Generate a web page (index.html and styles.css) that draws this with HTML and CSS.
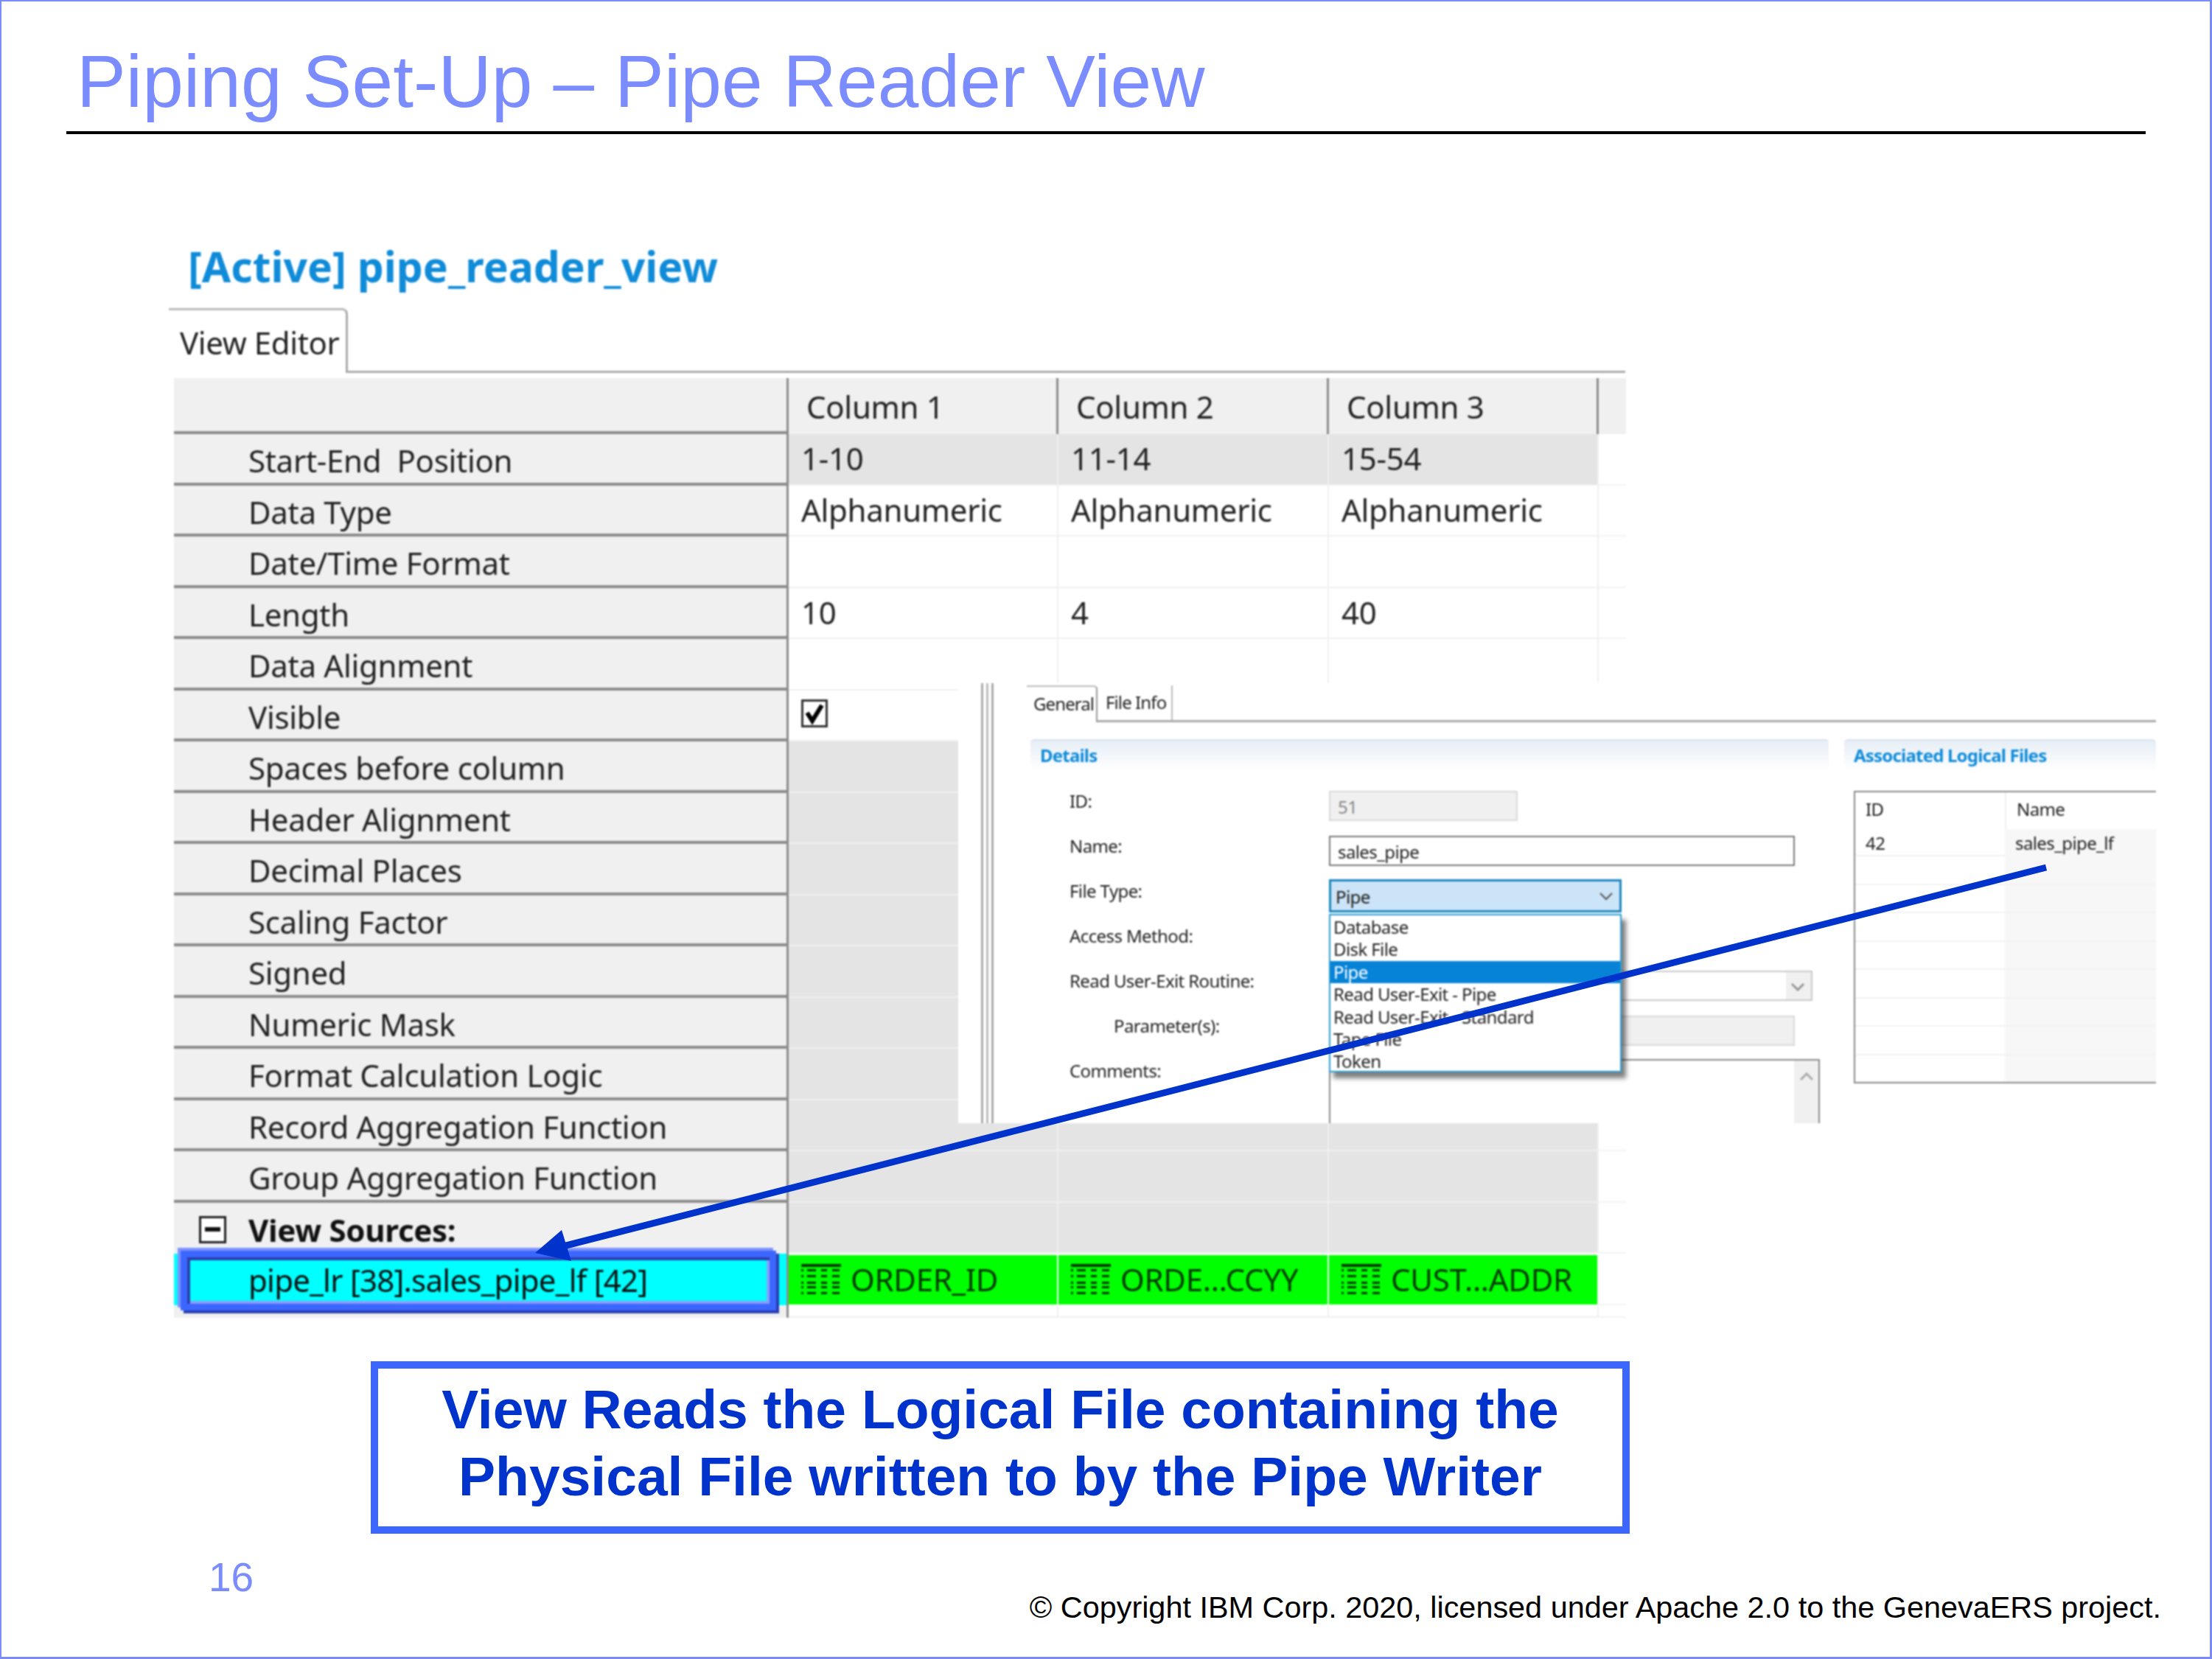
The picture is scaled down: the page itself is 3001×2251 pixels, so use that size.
FILE: index.html
```
<!DOCTYPE html>
<html lang="en">
<head>
  <meta charset="UTF-8" />
  <title>Piping Set-Up - Pipe Reader View</title>
  <link rel="stylesheet" href="styles.css">
</head>
<body>
  <div class="slide">
    <h1 class="slide-title">Piping Set-Up – Pipe Reader View</h1>
    <div class="slide-rule"></div>

    <div class="capture">
      <div class="view-title">[Active] pipe_reader_view</div>
      <div class="editor-tabs"><div class="editor-tab">View Editor</div></div>

      <div class="sheet">
        <div class="row row-head">
          <div class="label"></div>
          <div class="cell">Column 1</div>
          <div class="cell">Column 2</div>
          <div class="cell">Column 3</div>
          <div class="tail"></div>
        </div>
        <div class="row row-shaded">
          <div class="label">Start-End&nbsp; Position</div>
          <div class="cell">1-10</div>
          <div class="cell">11-14</div>
          <div class="cell">15-54</div>
          <div class="tail"></div>
        </div>
        <div class="row">
          <div class="label">Data Type</div>
          <div class="cell">Alphanumeric</div>
          <div class="cell">Alphanumeric</div>
          <div class="cell">Alphanumeric</div>
          <div class="tail"></div>
        </div>
        <div class="row">
          <div class="label">Date/Time Format</div>
          <div class="cell"></div>
          <div class="cell"></div>
          <div class="cell"></div>
          <div class="tail"></div>
        </div>
        <div class="row">
          <div class="label">Length</div>
          <div class="cell">10</div>
          <div class="cell">4</div>
          <div class="cell">40</div>
          <div class="tail"></div>
        </div>
        <div class="row">
          <div class="label">Data Alignment</div>
          <div class="cell"></div>
          <div class="cell"></div>
          <div class="cell"></div>
          <div class="tail"></div>
        </div>
        <div class="row">
          <div class="label">Visible</div>
          <div class="cell">
            <svg class="checkbox" viewBox="0 0 36 38">
              <rect x="1.5" y="1.5" width="33" height="35" fill="#fff" stroke="#333" stroke-width="3"/>
              <path d="M8 18 L15 29 L28 8" fill="none" stroke="#000" stroke-width="6"/>
            </svg>
          </div>
          <div class="cell"></div>
          <div class="cell"></div>
          <div class="tail"></div>
        </div>
        <div class="row row-shaded">
          <div class="label">Spaces before column</div>
          <div class="cell"></div><div class="cell"></div><div class="cell"></div><div class="tail"></div>
        </div>
        <div class="row row-shaded">
          <div class="label">Header Alignment</div>
          <div class="cell"></div><div class="cell"></div><div class="cell"></div><div class="tail"></div>
        </div>
        <div class="row row-shaded">
          <div class="label">Decimal Places</div>
          <div class="cell"></div><div class="cell"></div><div class="cell"></div><div class="tail"></div>
        </div>
        <div class="row row-shaded">
          <div class="label">Scaling Factor</div>
          <div class="cell"></div><div class="cell"></div><div class="cell"></div><div class="tail"></div>
        </div>
        <div class="row row-shaded">
          <div class="label">Signed</div>
          <div class="cell"></div><div class="cell"></div><div class="cell"></div><div class="tail"></div>
        </div>
        <div class="row row-shaded">
          <div class="label">Numeric Mask</div>
          <div class="cell"></div><div class="cell"></div><div class="cell"></div><div class="tail"></div>
        </div>
        <div class="row row-shaded">
          <div class="label">Format Calculation Logic</div>
          <div class="cell"></div><div class="cell"></div><div class="cell"></div><div class="tail"></div>
        </div>
        <div class="row row-shaded">
          <div class="label">Record Aggregation Function</div>
          <div class="cell"></div><div class="cell"></div><div class="cell"></div><div class="tail"></div>
        </div>
        <div class="row row-shaded">
          <div class="label">Group Aggregation Function</div>
          <div class="cell"></div><div class="cell"></div><div class="cell"></div><div class="tail"></div>
        </div>
        <div class="row row-shaded row-group">
          <div class="label label-group">
            <span class="collapse-box"></span>
            <b>View Sources:</b>
          </div>
          <div class="cell"></div><div class="cell"></div><div class="cell"></div><div class="tail"></div>
        </div>
        <div class="row row-source">
          <div class="label label-source">
            <div class="source-frame"></div>
            <span class="source-name">pipe_lr [38].sales_pipe_lf [42]</span>
          </div>
          <div class="cell">
            <svg class="field-icon" viewBox="0 0 54 42"><use href="#field-grid"/></svg>ORDER_ID
          </div>
          <div class="cell">
            <svg class="field-icon" viewBox="0 0 54 42"><use href="#field-grid"/></svg>ORDE...CCYY
          </div>
          <div class="cell">
            <svg class="field-icon" viewBox="0 0 54 42"><use href="#field-grid"/></svg>CUST...ADDR
          </div>
          <div class="tail"></div>
        </div>
        <div class="row row-end">
          <div class="label"></div>
          <div class="cell"></div><div class="cell"></div><div class="cell"></div><div class="tail"></div>
        </div>
      </div>

      <!-- logical file editor pasted over the sheet -->
      <div class="lf-panel">
        <div class="sash"></div>
        <div class="lf-tabs">
          <div class="lf-tab lf-tab-on">General</div>
          <div class="lf-tab">File Info</div>
        </div>
        <div class="lf-cols">
          <div class="lf-details">
            <div class="section-head">Details</div>
            <div class="form">
              <div class="form-row">
                <div class="form-label">ID:</div>
                <div class="field field-off field-id">51</div>
              </div>
              <div class="form-row">
                <div class="form-label">Name:</div>
                <div class="field field-name">sales_pipe</div>
              </div>
              <div class="form-row">
                <div class="form-label">File Type:</div>
                <div class="combo-wrap">
                  <div class="field combo-open">Pipe
                    <svg class="chev" viewBox="0 0 20 12"><path d="M2 2 L10 10 L18 2" fill="none" stroke="#555" stroke-width="2"/></svg>
                  </div>
                  <div class="combo-list">
                    <div class="combo-item">Database</div>
                    <div class="combo-item">Disk File</div>
                    <div class="combo-item combo-item-on">Pipe</div>
                    <div class="combo-item">Read User-Exit - Pipe</div>
                    <div class="combo-item">Read User-Exit - Standard</div>
                    <div class="combo-item">Tape File</div>
                    <div class="combo-item">Token</div>
                  </div>
                </div>
              </div>
              <div class="form-row">
                <div class="form-label">Access Method:</div>
              </div>
              <div class="form-row">
                <div class="form-label">Read User-Exit Routine:</div>
                <div class="field combo-off">
                  <span class="combo-btn">
                    <svg class="chev" viewBox="0 0 20 12"><path d="M2 2 L10 10 L18 2" fill="none" stroke="#999" stroke-width="3"/></svg>
                  </span>
                </div>
              </div>
              <div class="form-row">
                <div class="form-label form-label-sub">Parameter(s):</div>
                <div class="field field-off field-name"></div>
              </div>
              <div class="form-row">
                <div class="form-label">Comments:</div>
                <div class="field field-comments">
                  <span class="scroll-bar">
                    <svg class="chev" viewBox="0 0 20 12"><path d="M2 10 L10 2 L18 10" fill="none" stroke="#aaa" stroke-width="3"/></svg>
                  </span>
                </div>
              </div>
            </div>
          </div>
          <div class="lf-assoc">
            <div class="section-head">Associated Logical Files</div>
            <div class="assoc-table">
              <div class="assoc-row assoc-head"><div>ID</div><div>Name</div></div>
              <div class="assoc-row assoc-first"><div>42</div><div class="assoc-name">sales_pipe_lf</div></div>
              <div class="assoc-row"><div></div><div class="assoc-name"></div></div>
              <div class="assoc-row"><div></div><div class="assoc-name"></div></div>
              <div class="assoc-row"><div></div><div class="assoc-name"></div></div>
              <div class="assoc-row"><div></div><div class="assoc-name"></div></div>
              <div class="assoc-row"><div></div><div class="assoc-name"></div></div>
              <div class="assoc-row"><div></div><div class="assoc-name"></div></div>
              <div class="assoc-row"><div></div><div class="assoc-name"></div></div>
              <div class="assoc-row assoc-last"><div></div><div class="assoc-name"></div></div>
            </div>
          </div>
        </div>
      </div>
    </div>

    <div class="callout">View Reads the Logical File containing the<br>Physical File written to by the Pipe Writer</div>

    <div class="slide-foot">
      <div class="page-num">16</div>
      <div class="copyright">© Copyright IBM Corp. 2020, licensed under Apache 2.0 to the GenevaERS project.</div>
    </div>

    <svg class="arrow" viewBox="0 0 3001 2251">
      <line x1="2776" y1="1177" x2="760" y2="1692" stroke="#0033cc" stroke-width="9"/>
      <polygon points="762,1669 726,1700 775,1711" fill="#0033cc"/>
    </svg>
  </div>

  <svg class="defs-only">
    <defs>
      <g id="field-grid" fill="#063a06">
        <rect x="0" y="0" width="54" height="4"/>
        <path id="field-line" d="M0 7h3v3h-3z M8 7h12v3h-12z M27 7h8v3h-8z M42 7h10v3h-10z"/>
        <use href="#field-line" y="8"/>
        <use href="#field-line" y="17"/>
        <use href="#field-line" y="23"/>
        <use href="#field-line" y="31"/>
      </g>
    </defs>
  </svg>
</body>
</html>
```

FILE: styles.css
```
* {
  margin: 0;
  padding: 0;
  box-sizing: border-box;
}

body {
  font-family: "Liberation Sans", Arial, sans-serif;
  background: #fff;
}

.slide {
  width: 3001px;
  height: 2251px;
  position: relative;
  overflow: hidden;
  background: #fff;
  box-shadow: inset 2px 2px 0 #7b8cff, inset -3px -3px 0 #7b8cf0;
}

.slide-title {
  height: 115px;
  margin: 53px 0 10px 104px;
  font-size: 100px;
  line-height: 115px;
  font-weight: normal;
  letter-spacing: .12px;
  color: #7b8cff;
}

.slide-rule {
  width: 2821px;
  height: 4px;
  margin-left: 90px;
  background: #000;
}

/* pasted screenshot of the editor */
.capture {
  position: relative;
  margin-top: 146px;
  font-family: "Noto Sans", sans-serif;
  color: #222;
  filter: blur(0.8px);
}

.view-title {
  height: 90px;
  margin-left: 255px;
  font-size: 57px;
  line-height: 66px;
  font-weight: bold;
  color: #0f8bd8;
}

.editor-tabs {
  height: 88px;
  margin-left: 229px;
  width: 1976px;
  border-bottom: 3px solid #aaa;
}

.editor-tab {
  width: 243px;
  height: 88px;
  padding: 16px 0 0 15px;
  border-top: 3px solid #bbb;
  border-right: 3px solid #aaa;
  border-top-right-radius: 8px;
  background: #fff;
  font-size: 42px;
  line-height: 56px;
  letter-spacing: -.4px;
  white-space: nowrap;
}

.sheet {
  margin: 7px 0 0 236px;
  width: 1970px;
  font-size: 42px;
  letter-spacing: -.3px;
}

.row {
  display: grid;
  grid-template-columns: 834px 366px 367px 366px 37px;
  height: 69.5px;
}

.row-head {
  height: 76px;
}

.label {
  display: flex;
  align-items: center;
  padding: 6px 0 0 101px;
  background: #f0f0f0;
  border-right: 3px solid #8c8c8c;
  border-bottom: 4px solid #8c8c8c;
  white-space: nowrap;
}

.cell {
  display: flex;
  align-items: center;
  padding: 0 0 2px 17px;
  border-right: 2px solid #f0f0f0;
  border-bottom: 2px solid #f0f0f0;
  white-space: nowrap;
}

.tail {
  border-bottom: 2px solid #f3f3f3;
}

.row-head .cell {
  padding: 0 0 0 24px;
  background: #f0f0f0;
  border-right: 3px solid #8c8c8c;
  border-bottom: none;
}

.row-head .tail {
  background: #f0f0f0;
  border-bottom: none;
}

.row-shaded .cell {
  background: #e4e4e4;
}

.checkbox {
  width: 36px;
  height: 38px;
  margin-bottom: 2px;
}

.row-group .label-group {
  padding: 4px 0 0 34px;
  gap: 30px;
  border-bottom: none;
}

.row-group .label-group b {
  font-weight: bold;
  color: #111;
}

.collapse-box {
  width: 37px;
  height: 37px;
  border: 3px solid #222;
  background: #fff;
  display: flex;
  align-items: center;
  justify-content: center;
  flex-shrink: 0;
}

.collapse-box::after {
  content: "";
  width: 21px;
  height: 6px;
  background: #111;
}

.row-source {
  height: 70px;
}

.label-source {
  position: relative;
  padding-top: 0;
  background: #00ffff;
  border-bottom: none;
  color: #111;
}

.source-name {
  position: relative;
  letter-spacing: -.75px;
}

.source-frame {
  position: absolute;
  left: 9px;
  top: -4px;
  width: 808px;
  height: 81px;
  border: 9px solid #3b66ff;
  box-shadow:
    -4px -4px 0 #7f93ff,
    4px 4px 0 #2a3fb0,
    inset 4px 4px 0 #2a3fb0,
    inset -4px -4px 0 #8a9fff;
}

.row-source .cell {
  margin: 2px 0 1px;
  padding: 0 0 2px 17px;
  background: #00ff00;
  color: #063a06;
  border-bottom: none;
  gap: 13px;
}

.field-icon {
  width: 54px;
  height: 42px;
  flex-shrink: 0;
}

.row-end {
  height: 17px;
}

.row-end .label {
  border-bottom: none;
}

/* logical file panel */
.lf-panel {
  position: absolute;
  left: 1300px;
  top: 599px;
  width: 1625px;
  height: 597px;
  overflow: hidden;
  background: #fff;
  font-size: 24px;
  letter-spacing: -.6px;
}

.sash {
  position: absolute;
  left: 31px;
  top: 0;
  width: 17px;
  height: 100%;
  border-left: 3px solid #aaa;
  border-right: 3px solid #aaa;
  background: linear-gradient(90deg, #fff 0 4px, #bbb 4px 7px, #fff 7px);
}

.lf-tabs {
  display: flex;
  height: 50px;
  margin: 3px 0 0 93px;
  border-bottom: 3px solid #aaa;
  line-height: 46px;
  letter-spacing: -.9px;
}

.lf-tab {
  padding-left: 11px;
  height: 47px;
  width: 102px;
  border-right: 2px solid #bbb;
  white-space: nowrap;
}

.lf-tab-on {
  width: 96px;
  padding-left: 9px;
  border-top: 2px solid #bbb;
  border-right: 2px solid #999;
  border-top-right-radius: 5px;
  height: 50px;
  background: #fff;
}

.lf-cols {
  display: grid;
  grid-template-columns: 1083px 423px;
  gap: 21px;
  margin: 23px 0 0 98px;
}

.section-head {
  height: 42px;
  padding-left: 13px;
  border-top: 2px solid #d8e4ee;
  border-radius: 5px 5px 0 0;
  background: linear-gradient(#e6eef5, #fff);
  color: #0f8bd8;
  font-weight: bold;
  line-height: 40px;
  letter-spacing: -.8px;
}

.form {
  margin-top: 18px;
}

.form-row {
  display: grid;
  grid-template-columns: 352px 1fr;
  grid-template-rows: 61px;
  height: 61px;
  align-items: center;
  padding-left: 53px;
}

.form-label {
  padding-bottom: 14px;
  white-space: nowrap;
}

.form-label-sub {
  padding-left: 60px;
}

.field {
  height: 41px;
  padding-left: 10px;
  line-height: 39px;
  border: 2px solid #7a7a7a;
  position: relative;
}

.field-off {
  border-color: #d9d9d9;
  background: #f0f0f0;
  color: #888;
}

.field-id {
  width: 256px;
}

.field-name {
  width: 632px;
}

.combo-wrap {
  position: relative;
  width: 397px;
}

.combo-open {
  height: 45px;
  padding-left: 6px;
  line-height: 42px;
  border: 3px solid #1f86bd;
  background: #cce4f7;
}

.chev {
  position: absolute;
  right: 8px;
  top: 14px;
  width: 20px;
  height: 12px;
}

.combo-list {
  position: absolute;
  left: 0;
  top: 47px;
  width: 397px;
  height: 215px;
  z-index: 2;
  padding-top: 1px;
  background: #fff;
  border: 2px solid #2a9ad0;
  box-shadow: 6px 8px 6px rgba(0, 0, 0, .5);
}

.combo-item {
  height: 30.4px;
  padding-left: 4px;
  line-height: 30px;
  white-space: nowrap;
}

.combo-item-on {
  background: #0683d6;
  color: #fff;
}

.combo-off {
  width: 656px;
  border-color: #c8c8c8;
}

.combo-btn {
  position: absolute;
  right: 0;
  top: 0;
  width: 34px;
  height: 37px;
  background: #f0f0f0;
}

.field-comments {
  align-self: start;
  width: 666px;
  height: 200px;
  margin-top: 8px;
  border-color: #8a8a8a;
}

.scroll-bar {
  position: absolute;
  right: 0;
  top: 0;
  width: 33px;
  height: 100%;
  background: #f0f0f0;
}

.scroll-bar .chev {
  right: 6px;
  top: 16px;
}

.assoc-table {
  margin: 28px 0 0 13px;
  height: 397px;
  overflow: hidden;
  border: 2px solid #8a8a8a;
  border-right: none;
}

.assoc-row {
  display: grid;
  grid-template-columns: 203px 1fr;
  height: 38.5px;
  line-height: 37px;
  border-bottom: 2px solid #f2f2f2;
}

.assoc-row > div {
  padding-left: 14px;
}

.assoc-head {
  height: 50px;
  line-height: 46px;
  border-bottom: none;
}

.assoc-first {
  height: 37px;
}

.assoc-last {
  height: 36px;
  border-bottom: none;
}

.assoc-name {
  background: #f7f7f7;
}

.assoc-head > div:last-child {
  border-left: 2px solid #eee;
}

/* bottom of the slide */
.callout {
  width: 1708px;
  height: 234px;
  margin: 59px 0 0 503px;
  padding-top: 10px;
  border: 10px solid #3b66ff;
  text-align: center;
  font-size: 75px;
  line-height: 91px;
  font-weight: bold;
  color: #0033cc;
}

.slide-foot {
  display: flex;
  justify-content: space-between;
  align-items: flex-start;
  padding: 28px 69px 0 283px;
}

.page-num {
  font-size: 55px;
  line-height: 62px;
  color: #7b8cff;
}

.copyright {
  margin-top: 49px;
  font-size: 41.4px;
  line-height: 46px;
  color: #000;
}

.arrow {
  position: absolute;
  left: 0;
  top: 0;
  width: 3001px;
  height: 2251px;
  pointer-events: none;
}

.defs-only {
  position: absolute;
  width: 0;
  height: 0;
}
```
